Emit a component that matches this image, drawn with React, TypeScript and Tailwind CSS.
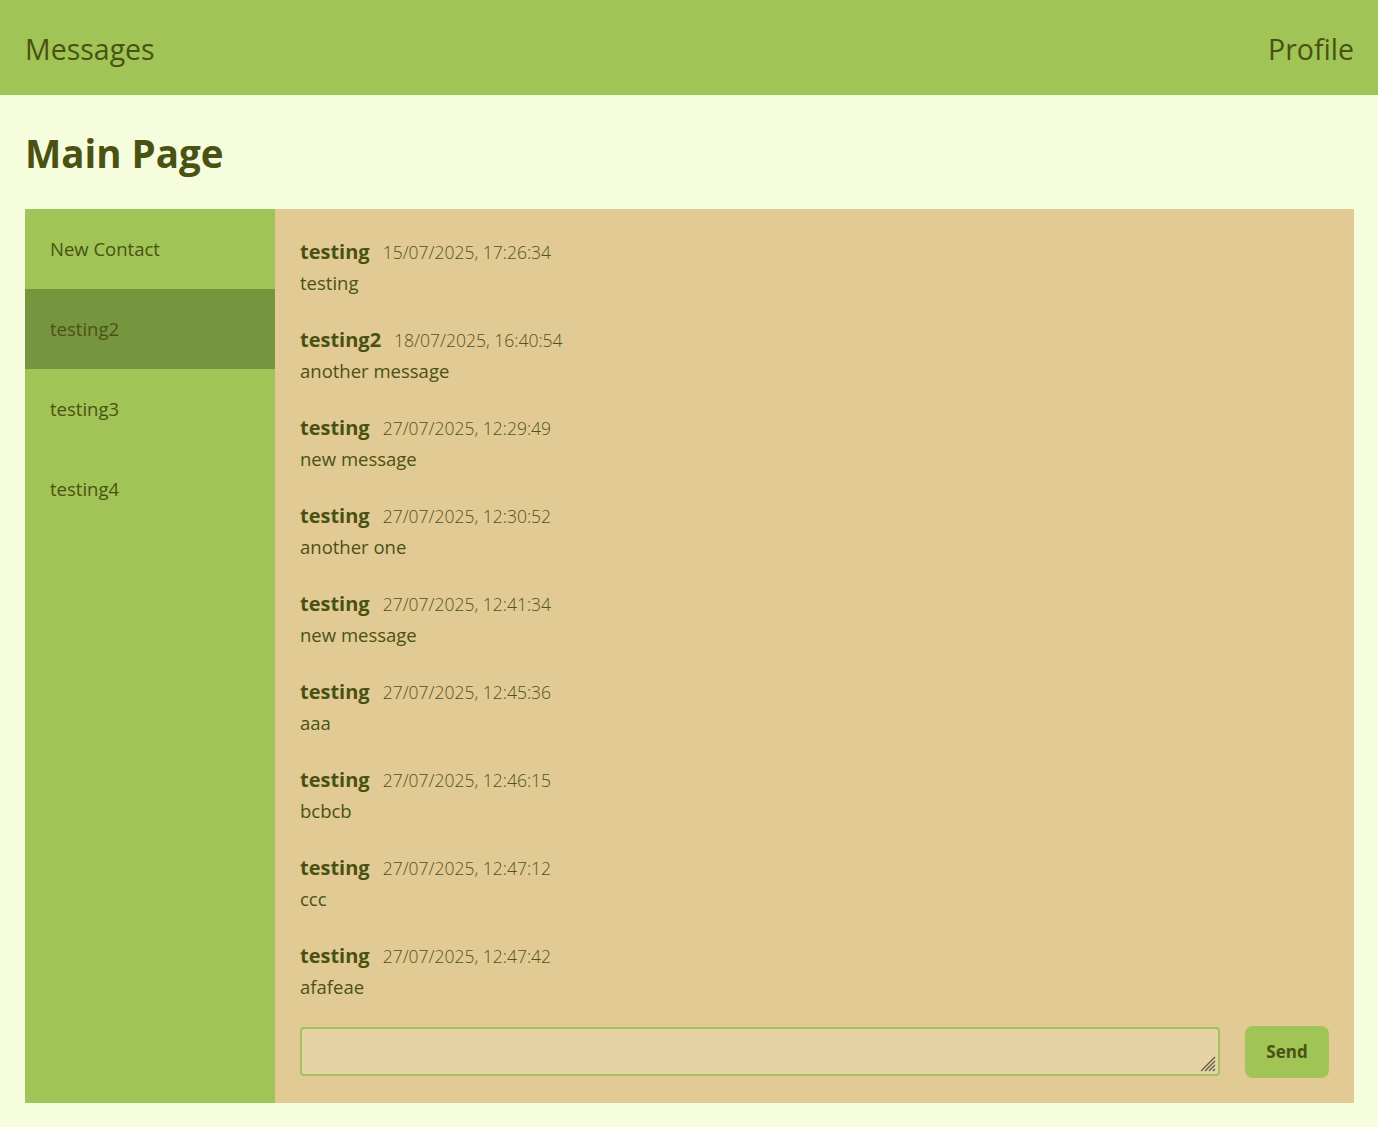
import React from "react";

const messages = [
  { user: "testing", time: "15/07/2025, 17:26:34", text: "testing" },
  { user: "testing2", time: "18/07/2025, 16:40:54", text: "another message" },
  { user: "testing", time: "27/07/2025, 12:29:49", text: "new message" },
  { user: "testing", time: "27/07/2025, 12:30:52", text: "another one" },
  { user: "testing", time: "27/07/2025, 12:41:34", text: "new message" },
  { user: "testing", time: "27/07/2025, 12:45:36", text: "aaa" },
  { user: "testing", time: "27/07/2025, 12:46:15", text: "bcbcb" },
  { user: "testing", time: "27/07/2025, 12:47:12", text: "ccc" },
  { user: "testing", time: "27/07/2025, 12:47:42", text: "afafeae" },
];

const contacts = ["New Contact", "testing2", "testing3", "testing4"];

export default function App() {
  return (
    <div
      className="min-h-[1127px] bg-[#f6fddc] text-[#4a5213]"
      style={{ fontFamily: '"Open Sans", "Noto Sans", sans-serif' }}
    >
      <header className="h-[95px] bg-[#a0c455] flex items-center justify-between pl-[25px] pr-[24px] pt-[3px]">
        <span className="text-[28.5px] leading-none">Messages</span>
        <span className="text-[28.5px] leading-none">Profile</span>
      </header>
      <main className="px-[24px] pl-[25px]">
        <h1 className="h-[114px] flex items-center text-[38.5px] font-bold leading-none pt-[2px]">
          Main Page
        </h1>
        <div className="flex h-[894px]">
          <aside className="w-[250px] shrink-0 bg-[#a0c455]">
            {contacts.map((c, i) => (
              <div
                key={c}
                className={
                  "h-[80px] flex items-center px-[25px] text-[18.5px] " +
                  (i === 1 ? "bg-[#76953f]" : "")
                }
              >
                {c}
              </div>
            ))}
          </aside>
          <section className="flex-1 bg-[#e1ca94] flex flex-col px-[25px] pt-[29px] pb-[25px]">
            <div className="flex flex-col gap-[29px]">
              {messages.map((m, i) => (
                <div key={i}>
                  <div className="h-[28px] flex items-center gap-[13px]">
                    <span className="text-[20px] font-bold">{m.user}</span>
                    <span className="text-[17.5px] font-light text-[#52531a]">{m.time}</span>
                  </div>
                  <div className="mt-[3px] h-[28px] leading-[28px] text-[18.5px]">{m.text}</div>
                </div>
              ))}
            </div>
            <div className="mt-[25px] flex items-center gap-[25px] h-[52px]">
              <div className="relative flex-1 h-[49px] -mt-[1px]">
                <textarea className="block w-full h-full resize-none bg-[#e6d3a3] border-2 border-[#a0c455] rounded-[4px] outline-none" />
                <svg
                  className="absolute right-[4px] bottom-[4px]"
                  width="16"
                  height="16"
                  viewBox="0 0 16 16"
                >
                  <g stroke="#5b5a4e" strokeWidth="1.2">
                    <line x1="1" y1="15" x2="15" y2="1" />
                    <line x1="5" y1="15" x2="15" y2="5" />
                    <line x1="9" y1="15" x2="15" y2="9" />
                    <line x1="13" y1="15" x2="15" y2="13" />
                  </g>
                </svg>
              </div>
              <button className="w-[84px] h-[52px] bg-[#a0c455] rounded-[8px] font-bold text-[17px]">
                Send
              </button>
            </div>
          </section>
        </div>
      </main>
    </div>
  );
}
